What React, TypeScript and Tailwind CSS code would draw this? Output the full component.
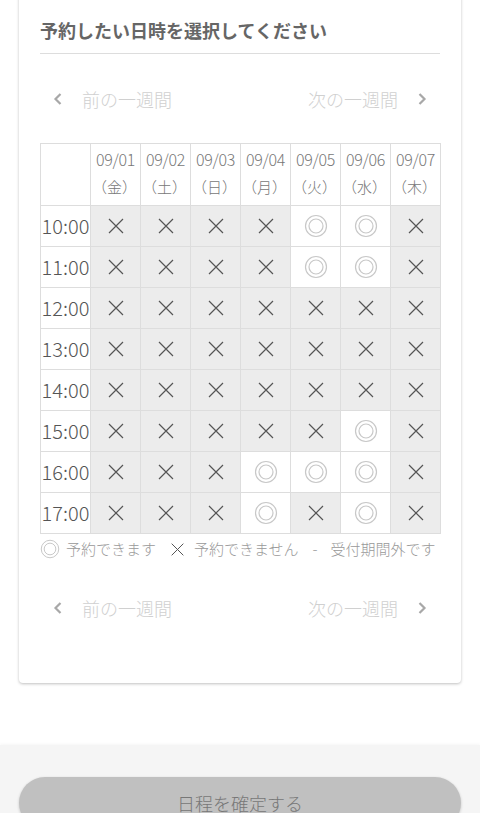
import React from 'react';

const days = [
  { d: '09/01', w: '金' },
  { d: '09/02', w: '土' },
  { d: '09/03', w: '日' },
  { d: '09/04', w: '月' },
  { d: '09/05', w: '火' },
  { d: '09/06', w: '水' },
  { d: '09/07', w: '木' },
];

// o = 予約できます, x = 予約できません
const slots: { time: string; row: string }[] = [
  { time: '10:00', row: 'xxxxoox' },
  { time: '11:00', row: 'xxxxoox' },
  { time: '12:00', row: 'xxxxxxx' },
  { time: '13:00', row: 'xxxxxxx' },
  { time: '14:00', row: 'xxxxxxx' },
  { time: '15:00', row: 'xxxxxox' },
  { time: '16:00', row: 'xxxooox' },
  { time: '17:00', row: 'xxxoxox' },
];

const Cross = ({ size = 18 }: { size?: number }) => (
  <svg width={size} height={size} viewBox="0 0 18 18" className="inline-block">
    <path d="M2 2 L16 16 M16 2 L2 16" stroke="#555" strokeWidth="1.2" fill="none" />
  </svg>
);

const Double = ({ size = 24 }: { size?: number }) => (
  <svg width={size} height={size} viewBox="0 0 24 24" className="inline-block">
    <circle cx="12" cy="12" r="10.5" stroke="#c8c8c8" strokeWidth="1.2" fill="none" />
    <circle cx="12" cy="12" r="7" stroke="#c8c8c8" strokeWidth="1.2" fill="none" />
  </svg>
);

const Chevron = ({ dir }: { dir: 'l' | 'r' }) => (
  <svg width="10" height="14" viewBox="0 0 10 14">
    <path
      d={dir === 'l' ? 'M7.5 2 L2.5 7 L7.5 12' : 'M2.5 2 L7.5 7 L2.5 12'}
      stroke="#a8a8a8"
      strokeWidth="2.2"
      fill="none"
    />
  </svg>
);

const WeekNav = () => (
  <div className="flex items-center justify-between h-6 text-[18px] leading-6 text-[#d0d0d0]">
    <div className="flex items-center gap-[19px] pl-[13px]">
      <Chevron dir="l" />
      <span>前の一週間</span>
    </div>
    <div className="flex items-center gap-[19px] pr-[13px]">
      <span>次の一週間</span>
      <Chevron dir="r" />
    </div>
  </div>
);

export default function App() {
  return (
    <div
      className="min-h-[813px] bg-white overflow-hidden font-light"
      style={{ fontFamily: '"Noto Sans CJK JP Light", "Noto Sans CJK JP", "Noto Sans", sans-serif' }}
    >
      <div className="mx-[19px] -mt-[10px] pt-[28px] pb-[63px] px-[21px] bg-white rounded shadow-[0_1px_3px_rgba(0,0,0,0.25)]">
        <h2
          className="text-[18px] leading-6 font-bold text-[#666] pb-[11px] border-b border-[#ddd]"
          style={{ fontFamily: '"Noto Sans CJK JP", sans-serif' }}
        >
          予約したい日時を選択してください
        </h2>

        <div className="mt-[33px]">
          <WeekNav />
        </div>

        <table className="mt-[32px] w-[400px] table-fixed border-collapse">
          <thead>
            <tr className="h-[62px]">
              <th className="w-[50px] border border-[#ddd] bg-white"></th>
              {days.map((d) => (
                <th
                  key={d.d}
                  className="w-[50px] border border-[#ddd] bg-white font-light text-[16px] leading-7 text-[#777] whitespace-nowrap align-top pt-[1px]"
                >
                  <div className="tracking-[-0.3px]">{d.d}</div>
                  <div className="-ml-[2px] text-[15px]">（{d.w}）</div>
                </th>
              ))}
            </tr>
          </thead>
          <tbody>
            {slots.map((s) => (
              <tr key={s.time} className="h-[41px]">
                <td className="border border-[#ddd] bg-white text-[20px] text-[#555] text-center p-0 whitespace-nowrap">
                  {s.time}
                </td>
                {s.row.split('').map((c, i) => (
                  <td
                    key={i}
                    className={
                      c === 'x'
                        ? 'border border-[#ddd] bg-[#ececec] text-center p-0'
                        : 'border border-[#ddd] bg-white text-center p-0'
                    }
                  >
                    <div className="flex items-center justify-center h-[40px]">
                      {c === 'x' ? <Cross /> : <Double />}
                    </div>
                  </td>
                ))}
              </tr>
            ))}
          </tbody>
        </table>

        <div className="mt-[5px] flex items-center h-5 text-[15px] leading-5 text-[#999] whitespace-nowrap">
          <Double size={20} />
          <span className="ml-[6px]">予約できます</span>
          <span className="ml-[14px] flex">
            <Cross size={15} />
          </span>
          <span className="ml-[9px]">予約できません</span>
          <span className="ml-[14px]">-</span>
          <span className="ml-[13px]">受付期間外です</span>
        </div>

        <div className="mt-[37px]">
          <WeekNav />
        </div>
      </div>

      <div className="mt-[62px] bg-[#f5f5f5] shadow-[0_-1px_3px_rgba(0,0,0,0.04)] pt-[32px] pb-6 px-[19px]">
        <button className="w-full h-[52px] rounded-full bg-[#c0c0c0] text-[18px] text-[#777] shadow-[0_1px_3px_rgba(0,0,0,0.2)]">
          日程を確定する
        </button>
      </div>
    </div>
  );
}
